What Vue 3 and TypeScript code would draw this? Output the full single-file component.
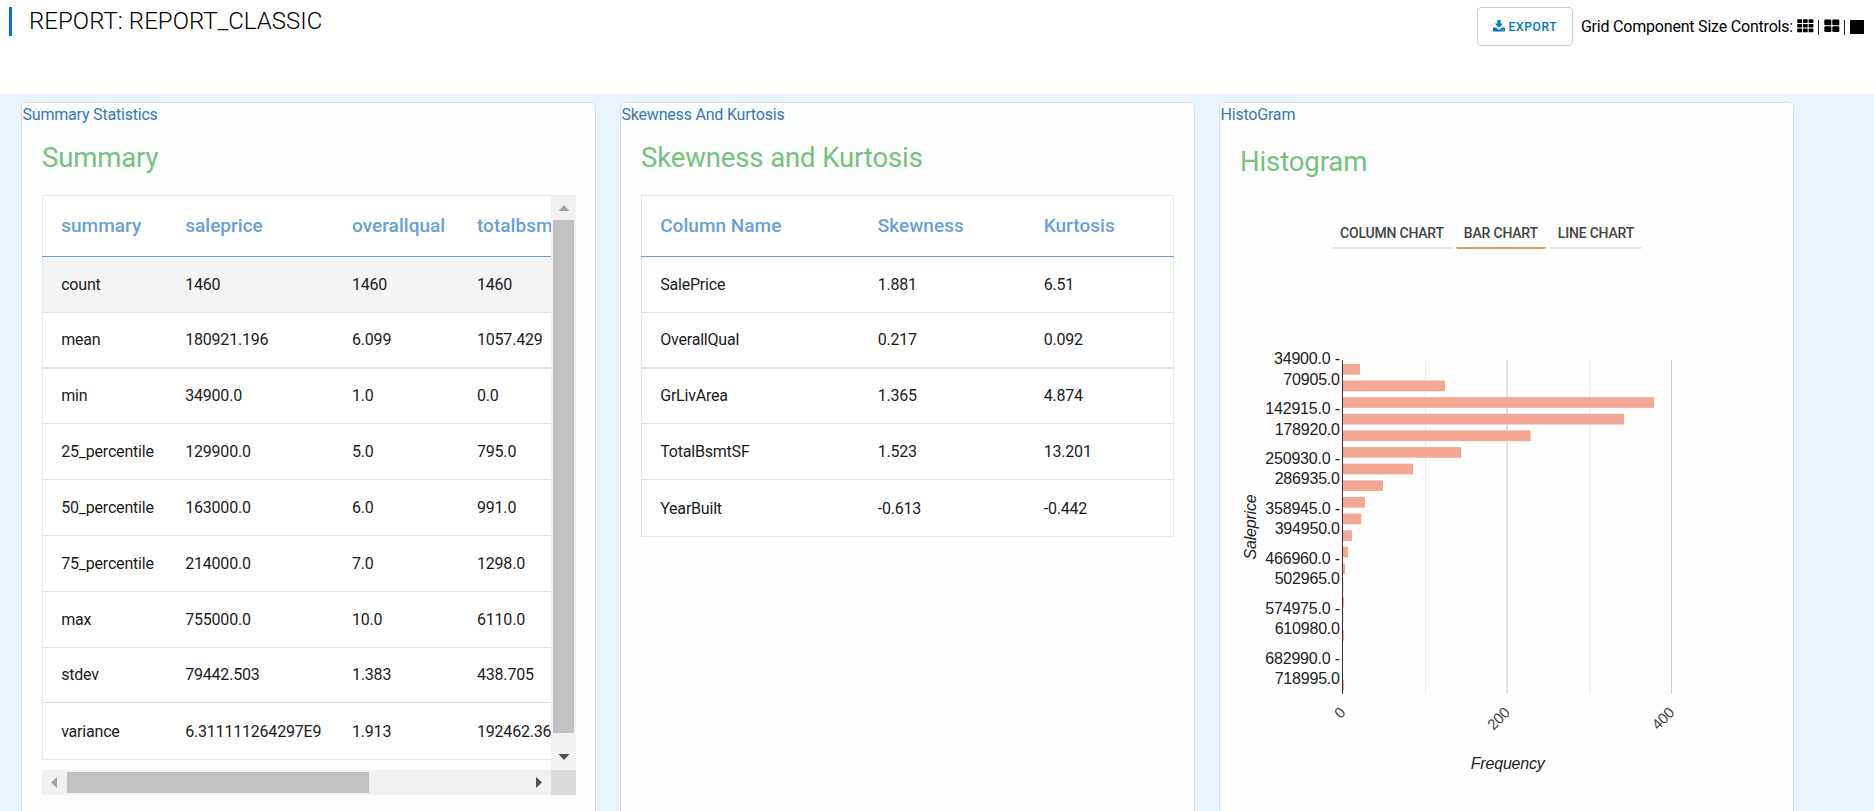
<script setup lang="ts">
import { ref } from 'vue'

const summaryHead: string[] = ['summary', 'saleprice', 'overallqual', 'totalbsm']
const summaryRows: string[][] = [
  ['count', '1460', '1460', '1460'],
  ['mean', '180921.196', '6.099', '1057.429'],
  ['min', '34900.0', '1.0', '0.0'],
  ['25_percentile', '129900.0', '5.0', '795.0'],
  ['50_percentile', '163000.0', '6.0', '991.0'],
  ['75_percentile', '214000.0', '7.0', '1298.0'],
  ['max', '755000.0', '10.0', '6110.0'],
  ['stdev', '79442.503', '1.383', '438.705'],
  ['variance', '6.311111264297E9', '1.913', '192462.36'],
]

const skewHead: string[] = ['Column Name', 'Skewness', 'Kurtosis']
const skewRows: string[][] = [
  ['SalePrice', '1.881', '6.51'],
  ['OverallQual', '0.217', '0.092'],
  ['GrLivArea', '1.365', '4.874'],
  ['TotalBsmtSF', '1.523', '13.201'],
  ['YearBuilt', '-0.613', '-0.442'],
]

const tabs: string[] = ['COLUMN CHART', 'BAR CHART', 'LINE CHART']
const activeTab = ref('BAR CHART')

// Histogram bucket bar lengths, in chart pixels
const bars: number[] = [17.3, 102.3, 311.3, 281.3, 188, 118.3, 70.3, 40.3, 22.3, 18.6, 9.3, 5.3, 2.3, 0.6, 1.4, 0.6, 1.4, 0, 0, 1.4]
const yLabels: { text: string; y: number }[] = [
  { text: '34900.0 -', y: 24 },
  { text: '70905.0', y: 45 },
  { text: '142915.0 -', y: 74 },
  { text: '178920.0', y: 95 },
  { text: '250930.0 -', y: 124 },
  { text: '286935.0', y: 144 },
  { text: '358945.0 -', y: 174 },
  { text: '394950.0', y: 194 },
  { text: '466960.0 -', y: 224 },
  { text: '502965.0', y: 244 },
  { text: '574975.0 -', y: 274 },
  { text: '610980.0', y: 294 },
  { text: '682990.0 -', y: 324 },
  { text: '718995.0', y: 344 },
]
const xLabels: { text: string; x: number }[] = [
  { text: '0', x: 106.2 },
  { text: '200', x: 270.7 },
  { text: '400', x: 435.3 },
]
</script>

<template>
  <div class="page">
    <header class="top">
      <h1 class="title">REPORT: REPORT_CLASSIC</h1>
      <div class="tools">
        <button class="export">
          <svg width="12" height="12" viewBox="0 0 12 12">
            <path d="M4.400 0h3.200v3.600h2.600L6 7.800 1.800 3.600h2.600z" fill="currentColor" />
            <path d="M.5 7.400h2.600L6 10l2.900-2.600h2.600q.5 0 .5.500v2.900q0 .7-.6.700H.6q-.6 0-.6-.7V7.900q0-.5.5-.5z" fill="currentColor" />
            <path d="M8.200 10h.9M10 10h.9" stroke="#fff" stroke-width=".7" />
          </svg>
          <span>EXPORT</span>
        </button>
        <span class="controls-label">Grid Component Size Controls:</span>
        <svg class="g3" width="17" height="14" viewBox="0 0 17 14">
          <template v-for="r in 3" :key="r">
            <rect v-for="c in 3" :key="c" :x="(c - 1) * 5.7 + 0.2" :y="(r - 1) * 4.7 + 0.2" width="4.800" height="3.700" rx=".6" />
          </template>
        </svg>
        <i class="sep"></i>
        <svg class="g2" width="16" height="14" viewBox="0 0 16 14">
          <rect x=".3" y=".4" width="7" height="5.800" rx="1" />
          <rect x="8.300" y=".4" width="7" height="5.800" rx="1" />
          <rect x=".3" y="7.200" width="7" height="5.800" rx="1" />
          <rect x="8.300" y="7.200" width="7" height="5.800" rx="1" />
        </svg>
        <i class="sep"></i>
        <i class="g1"></i>
      </div>
    </header>

    <main class="grid">
      <section class="card">
        <div class="label">Summary Statistics</div>
        <h2>Summary</h2>
        <div class="scrollbox">
          <div class="view">
            <div class="table wide">
              <div class="row head">
                <span v-for="h in summaryHead" :key="h">{{ h }}</span>
              </div>
              <div v-for="(row, i) in summaryRows" :key="row[0]" class="row" :class="{ hover: i === 0, thick: i === 1 }">
                <span v-for="(cell, j) in row" :key="j">{{ cell }}</span>
              </div>
            </div>
          </div>
          <div class="vbar">
            <svg width="25" height="25"><path d="M7.500 16h11L13 10z" fill="#a3a3a3" /></svg>
            <i class="vthumb"></i>
            <svg width="25" height="25"><path d="M7.500 9h11L13 15z" fill="#505050" /></svg>
          </div>
          <div class="hbar">
            <svg width="25" height="25"><path d="M15 7v11L9 12.500z" fill="#a3a3a3" /></svg>
            <i class="hthumb"></i>
            <svg width="25" height="25"><path d="M10 7v11l6-5.500z" fill="#505050" /></svg>
          </div>
          <div class="corner"></div>
        </div>
      </section>

      <section class="card">
        <div class="label">Skewness And Kurtosis</div>
        <h2>Skewness and Kurtosis</h2>
        <div class="table skew">
          <div class="row head">
            <span v-for="h in skewHead" :key="h">{{ h }}</span>
          </div>
          <div v-for="(row, i) in skewRows" :key="row[0]" class="row" :class="{ thick: i === 1 }">
            <span v-for="(cell, j) in row" :key="j">{{ cell }}</span>
          </div>
        </div>
      </section>

      <section class="card plot">
        <div class="label">HistoGram</div>
        <h2>Histogram</h2>
        <nav class="tabs">
          <button v-for="t in tabs" :key="t" :class="{ active: t === activeTab }" @click="activeTab = t">{{ t }}</button>
        </nav>
        <svg class="chart" width="500" height="460" viewBox="0 0 500 460">
          <g shape-rendering="crispEdges">
            <rect x="185" y="20" width="1" height="334" fill="#ebebeb" />
            <rect x="266" y="20" width="2" height="334" fill="#e0e0e0" />
            <rect x="349" y="20" width="2" height="334" fill="#f2f2f2" />
            <rect x="431" y="20" width="1" height="334" fill="#ccc" />
          </g>
          <rect v-for="(w, i) in bars" :key="i" x="102.700" :y="23.9 + i * 16.63" :width="w" height="10.700" fill="#f2a893" />
          <rect x="102" y="20" width="1" height="334" fill="#333" />
          <text v-for="l in yLabels" :key="l.text" x="99.800" :y="l.y" text-anchor="end" class="ylab">{{ l.text }}</text>
          <text v-for="l in xLabels" :key="l.text" text-anchor="end" :transform="`translate(${l.x} 373.500) rotate(-45)`" class="xlab">{{ l.text }}</text>
          <text class="axis" text-anchor="middle" transform="translate(15.500 187) rotate(-90)">Saleprice</text>
          <text class="axis" text-anchor="middle" x="267.700" y="429">Frequency</text>
        </svg>
      </section>
    </main>
  </div>
</template>

<style>
body {
  overflow: hidden;
}
</style>

<style scoped>
.page {
  display: flex;
  flex-direction: column;
  height: 811px;
  overflow: hidden;
  background: #fff;
  font-family: Roboto, "Liberation Sans", sans-serif;
  font-size: 16px;
  letter-spacing: -0.2px;
  color: #000;
}
.top {
  display: flex;
  justify-content: space-between;
  align-items: flex-start;
  height: 87px;
  flex: none;
  padding: 7px 10px 0 9px;
}
.title {
  margin: 0;
  height: 29px;
  line-height: 28px;
  border-left: 3px solid #0077b8;
  padding-left: 17px;
  font-size: 24px;
  font-weight: 300;
  letter-spacing: 0.050px;
  white-space: nowrap;
}
.tools {
  display: flex;
  align-items: center;
  height: 39px;
}
.export {
  box-sizing: border-box;
  width: 96px;
  height: 39px;
  display: flex;
  align-items: center;
  justify-content: center;
  gap: 4px;
  padding: 0;
  margin-right: 8px;
  border: 1px solid #ccc;
  border-radius: 4px;
  background: #fff;
  color: #0077b8;
  font: 500 12px Roboto, sans-serif;
  letter-spacing: 0.650px;
}
.export svg {
  margin-top: -2px;
}
.controls-label {
  margin-right: 4px;
  white-space: nowrap;
}
.g3,
.g2 {
  margin-top: -1px;
}
.sep {
  width: 1px;
  height: 15px;
  margin: 2px 5px 0 4px;
  background: #222;
}
.g1 {
  width: 14px;
  height: 14px;
  background: #000;
}
.grid {
  flex: 1;
  display: grid;
  grid-template-columns: 575px 575px 575px;
  gap: 24px;
  padding: 8px 0 0 21px;
  background: #e9f4ff;
}
.card {
  box-sizing: border-box;
  height: 760px;
  border: 1px solid #d9dfe5;
  border-radius: 5px;
  background: #fcfefe;
  padding: 2px 0 0 20px;
}
.plot {
  background: #fefefe;
}
.label {
  margin-left: -19.500px;
  line-height: 20px;
  color: #3876b8;
}
h2 {
  margin: 19px 0 0;
  height: 51px;
  line-height: 28px;
  font-size: 27.500px;
  letter-spacing: -0.120px;
  font-weight: 400;
  color: #76c17c;
}
.scrollbox {
  display: grid;
  grid-template-columns: 509px 25px;
  grid-template-rows: 575px 25px;
  width: 534px;
}
.view {
  overflow: hidden;
}
.table {
  box-sizing: border-box;
  border: 1px solid #e5e8ec;
  background: #fff;
}
.wide {
  width: 900px;
}
.skew {
  width: 533px;
}
.row {
  box-sizing: border-box;
  display: grid;
  height: 55.800px;
  align-items: center;
  padding-left: 18.200px;
  border-bottom: 1px solid #dcdfe4;
  color: #1b1b1b;
}
.row:last-child {
  border-bottom: 0;
}
.wide .row {
  grid-template-columns: 124px 166.800px 125px 200px;
}
.skew .row {
  grid-template-columns: 217.500px 166px 1fr;
}
.row.head {
  height: 61px;
  border-bottom: 1px solid #639ddb;
  margin: 0 -1px;
  padding: 0 0 2px 19.200px;
  font-size: 19px;
  letter-spacing: 0.030px;
  font-weight: 500;
  color: #689fdb;
}
.hover {
  background: #f4f4f4;
}
.thick {
  border-bottom: 2px solid #dee3e6;
}
.vbar,
.hbar {
  display: flex;
  background: #f1f1f1;
}
.vbar {
  flex-direction: column;
  align-items: center;
}
.hbar {
  align-items: center;
}
.vbar svg,
.hbar svg {
  flex: none;
}
.vthumb {
  width: 21px;
  height: 513px;
  margin-bottom: 12px;
  background: #c1c1c1;
}
.hthumb {
  width: 302px;
  height: 21px;
  margin-right: auto;
  background: #c1c1c1;
}
.corner {
  background: #dcdcdc;
}
.plot h2 {
  margin-top: 23px;
  height: 65px;
}
.tabs {
  display: flex;
  gap: 4px;
  margin-left: 92px;
}
.tabs button {
  height: 36px;
  padding: 5px 8px 0;
  border: 0;
  border-bottom: 2px solid #e4e4e4;
  border-radius: 2px;
  background: none;
  font: 500 14px Roboto, sans-serif;
  letter-spacing: -0.200px;
  color: #444;
  white-space: nowrap;
}
.tabs button.active {
  border-bottom-color: #dfa05a;
}
.chart {
  display: block;
  margin-top: 91px;
}
.ylab,
.axis {
  font: 16px "Liberation Sans", Arial, sans-serif;
  fill: #222;
}
.axis {
  font-style: italic;
}
.xlab {
  font: 15px "Liberation Sans", Arial, sans-serif;
  fill: #444;
}
</style>
